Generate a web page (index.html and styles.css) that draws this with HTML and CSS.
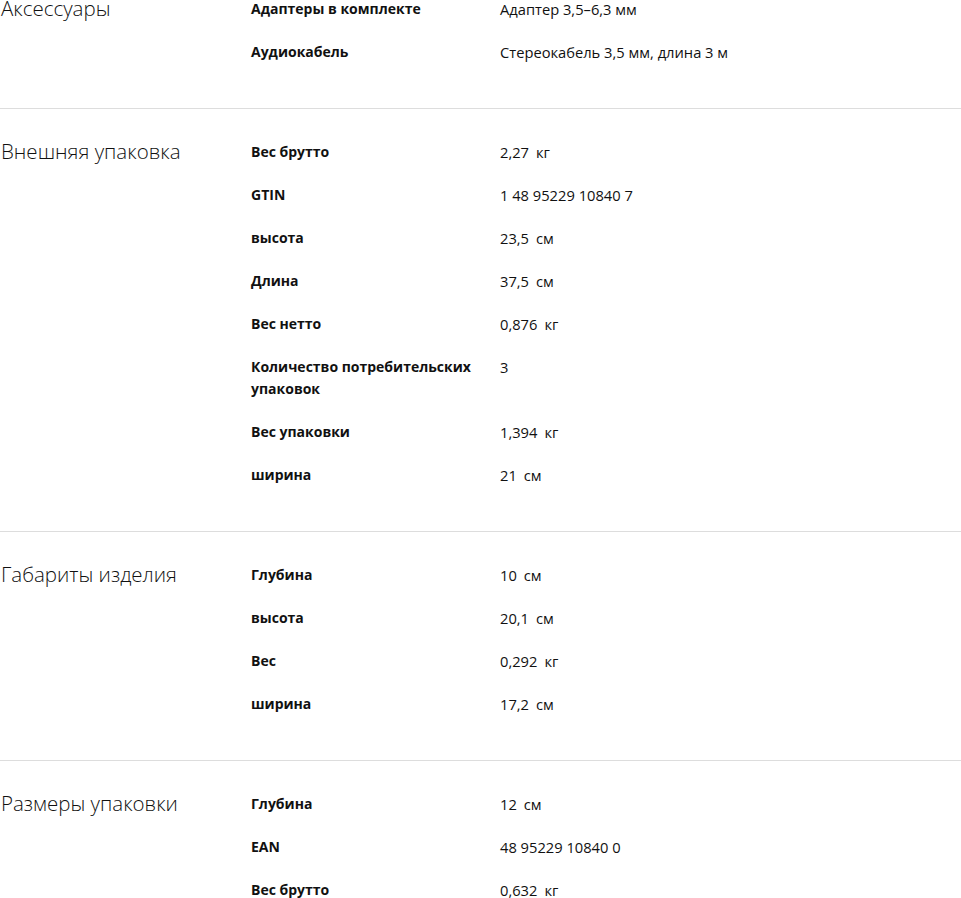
FILE: index.html
```html
<!DOCTYPE html>
<html lang="ru">
<head>
    <meta charset="UTF-8">
    <meta name="viewport" content="width=device-width, initial-scale=1.0">
    <title>Характеристики</title>
    <link rel="stylesheet" href="styles.css">
</head>
<body>
    <div class="specs">
        <div class="spec-group">
            <h2 class="group-title">Аксессуары</h2>
            <div class="spec-list">
                <div class="spec-row">
                    <div class="spec-name">Адаптеры в комплекте</div>
                    <div class="spec-value">Адаптер 3,5–6,3 мм</div>
                </div>
                <div class="spec-row">
                    <div class="spec-name">Аудиокабель</div>
                    <div class="spec-value">Стереокабель 3,5 мм, длина 3 м</div>
                </div>
            </div>
        </div>

        <div class="spec-group">
            <h2 class="group-title">Внешняя упаковка</h2>
            <div class="spec-list">
                <div class="spec-row">
                    <div class="spec-name">Вес брутто</div>
                    <div class="spec-value">2,27<span class="unit">кг</span></div>
                </div>
                <div class="spec-row">
                    <div class="spec-name">GTIN</div>
                    <div class="spec-value">1 48 95229 10840 7</div>
                </div>
                <div class="spec-row">
                    <div class="spec-name">высота</div>
                    <div class="spec-value">23,5<span class="unit">см</span></div>
                </div>
                <div class="spec-row">
                    <div class="spec-name">Длина</div>
                    <div class="spec-value">37,5<span class="unit">см</span></div>
                </div>
                <div class="spec-row">
                    <div class="spec-name">Вес нетто</div>
                    <div class="spec-value">0,876<span class="unit">кг</span></div>
                </div>
                <div class="spec-row">
                    <div class="spec-name">Количество потребительских упаковок</div>
                    <div class="spec-value">3</div>
                </div>
                <div class="spec-row">
                    <div class="spec-name">Вес упаковки</div>
                    <div class="spec-value">1,394<span class="unit">кг</span></div>
                </div>
                <div class="spec-row">
                    <div class="spec-name">ширина</div>
                    <div class="spec-value">21<span class="unit">см</span></div>
                </div>
            </div>
        </div>

        <div class="spec-group">
            <h2 class="group-title">Габариты изделия</h2>
            <div class="spec-list">
                <div class="spec-row">
                    <div class="spec-name">Глубина</div>
                    <div class="spec-value">10<span class="unit">см</span></div>
                </div>
                <div class="spec-row">
                    <div class="spec-name">высота</div>
                    <div class="spec-value">20,1<span class="unit">см</span></div>
                </div>
                <div class="spec-row">
                    <div class="spec-name">Вес</div>
                    <div class="spec-value">0,292<span class="unit">кг</span></div>
                </div>
                <div class="spec-row">
                    <div class="spec-name">ширина</div>
                    <div class="spec-value">17,2<span class="unit">см</span></div>
                </div>
            </div>
        </div>

        <div class="spec-group">
            <h2 class="group-title">Размеры упаковки</h2>
            <div class="spec-list">
                <div class="spec-row">
                    <div class="spec-name">Глубина</div>
                    <div class="spec-value">12<span class="unit">см</span></div>
                </div>
                <div class="spec-row">
                    <div class="spec-name">EAN</div>
                    <div class="spec-value">48 95229 10840 0</div>
                </div>
                <div class="spec-row">
                    <div class="spec-name">Вес брутто</div>
                    <div class="spec-value">0,632<span class="unit">кг</span></div>
                </div>
            </div>
        </div>
    </div>
</body>
</html>
```

FILE: styles.css
```css
body {
    font-family: 'Open Sans', 'Noto Sans', sans-serif;
    margin: 0;
    background: #fff;
    color: #111;
}

/* page is shown scrolled a little past the top of the block */
.specs {
    margin-top: -34px;
}

.spec-group {
    display: grid;
    grid-template-columns: 251px 1fr;
    align-items: start;
    padding: 32px 0 24px;
    border-bottom: 1px solid #ddd;
}

.group-title {
    margin: 0;
    padding-left: 1px;
    font-size: 20.5px;
    font-weight: 300;
    line-height: 20px;
    color: #111;
}

.spec-row {
    display: grid;
    grid-template-columns: 249px 1fr;
    padding-bottom: 21px;
    font-size: 14px;
    line-height: 22px;
}

.spec-name {
    font-weight: 700;
    padding-right: 24px;
}

.spec-value {
    font-size: 14.7px;
    font-weight: 400;
}

.unit {
    margin-left: 7px;
}
```
